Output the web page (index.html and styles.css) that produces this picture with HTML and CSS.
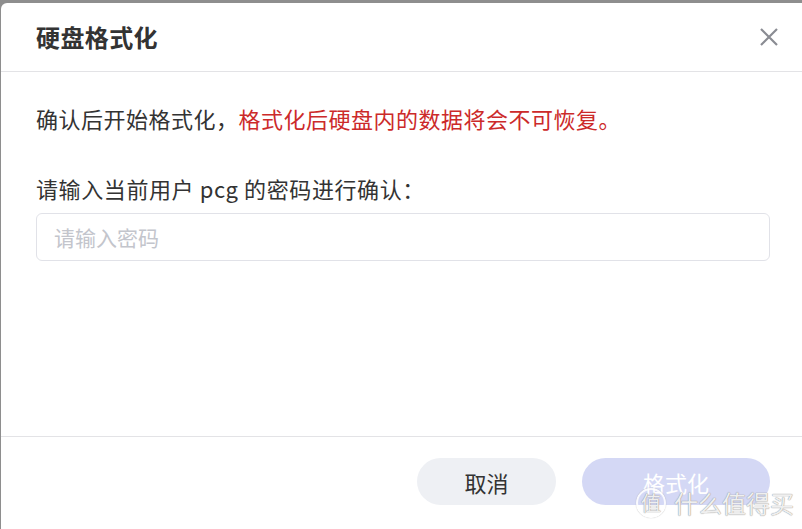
FILE: index.html
```html
<!DOCTYPE html>
<html lang="zh-CN">
<head>
    <meta charset="UTF-8">
    <meta name="viewport" content="width=device-width, initial-scale=1.0">
    <title>硬盘格式化</title>
    <link rel="stylesheet" href="styles.css">
</head>
<body>
    <div class="dialog">
        <div class="dialog-header">
            <h2 class="dialog-title">硬盘格式化</h2>
            <button class="close-btn" aria-label="关闭">
                <svg width="20" height="20" viewBox="0 0 20 20">
                    <path d="M2 2 L18 18 M18 2 L2 18" stroke="#8a8c93" stroke-width="2.2" fill="none"/>
                </svg>
            </button>
        </div>

        <div class="dialog-body">
            <p class="tip">确认后开始格式化，<span class="danger">格式化后硬盘内的数据将会不可恢复。</span></p>
            <p class="label">请输入当前用户 pcg 的密码进行确认：</p>
            <input class="pwd-input" type="password" placeholder="请输入密码">
        </div>

        <div class="dialog-footer">
            <button class="btn btn-cancel">取消</button>
            <button class="btn btn-primary" disabled>格式化</button>
        </div>
    </div>

    <div class="watermark">
        <span class="wm-logo">值</span>
        <span class="wm-text">什么值得买</span>
    </div>
</body>
</html>
```

FILE: styles.css
```css
body {
    margin: 0;
    background-color: #8e8e8e;
    font-family: "Noto Sans CJK SC", "Noto Sans", sans-serif;
    color: #333;
    overflow: hidden;
    height: 529px;
}
.dialog {
    margin: 3px 0 0 1px;
    width: 805px;
    height: 526px;
    overflow: hidden;
    background: white;
    border-radius: 6px 0 0 0;
}
.dialog-header {
    display: flex;
    justify-content: space-between;
    align-items: center;
    height: 68px;
    padding: 0 25px 0 35px;
    border-bottom: 1px solid #e3e3e6;
}
.dialog-title {
    margin: 0;
    font-size: 24px;
    font-weight: bold;
    letter-spacing: 0.4px;
    color: #333;
    line-height: 30px;
}
.close-btn {
    border: none;
    background: none;
    padding: 0;
    width: 24px;
    height: 24px;
    display: flex;
    align-items: center;
    justify-content: center;
    cursor: pointer;
}
.dialog-body {
    height: 365px;
    padding: 31px 36px 0 35px;
    box-sizing: border-box;
    border-bottom: 1px solid #e3e3e6;
}
.tip {
    margin: 0;
    font-size: 22px;
    letter-spacing: 0.5px;
    line-height: 30px;
    color: #333;
}
.danger {
    color: #cc2a2a;
}
.label {
    margin: 40px 0 10px;
    font-size: 22px;
    letter-spacing: 0.6px;
    line-height: 30px;
    color: #333;
}
.pwd-input {
    display: block;
    width: 100%;
    height: 48px;
    box-sizing: border-box;
    border: 1px solid #e1e2e8;
    border-radius: 6px;
    padding: 0 17px;
    font-family: inherit;
    font-size: 21px;
    outline: none;
}
.pwd-input::placeholder {
    color: #c3c5cc;
}
.dialog-footer {
    display: flex;
    justify-content: flex-end;
    gap: 26px;
    padding: 21px 36px 0 0;
}
.btn {
    height: 47px;
    border: none;
    border-radius: 24px;
    font-family: inherit;
    font-size: 22px;
    cursor: pointer;
}
.btn-cancel {
    width: 139px;
    background-color: #eef0f4;
    color: #333;
}
.btn-primary {
    width: 188px;
    background-color: #d4d8f5;
    color: white;
}
.watermark {
    position: absolute;
    left: 636px;
    top: 488px;
    display: flex;
    align-items: center;
    gap: 8px;
    color: rgba(255, 255, 255, 0.85);
    text-shadow: 0 0 1px #9a9a9a, 0 0 1px #9a9a9a;
}
.wm-logo {
    width: 26px;
    height: 26px;
    border: 2px solid rgba(255, 255, 255, 0.85);
    box-shadow: 0 0 1px #9a9a9a;
    border-radius: 50%;
    font-size: 20px;
    line-height: 26px;
    text-align: center;
}
.wm-text {
    font-size: 24px;
    line-height: 30px;
}
```
